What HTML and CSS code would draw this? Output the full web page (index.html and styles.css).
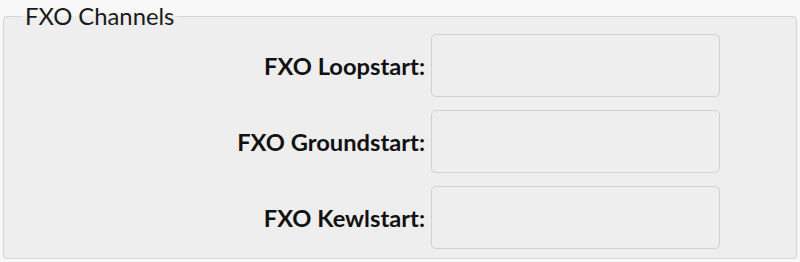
FILE: index.html
```html
<!DOCTYPE html>
<html lang="en">
<head>
    <meta charset="UTF-8">
    <title>FXO Channels</title>
    <link rel="stylesheet" href="styles.css">
</head>
<body>
    <fieldset class="channels">
        <legend>FXO Channels</legend>
        <div class="rows">
            <label for="loopstart">FXO Loopstart:</label>
            <input type="text" id="loopstart">

            <label for="groundstart">FXO Groundstart:</label>
            <input type="text" id="groundstart">

            <label for="kewlstart">FXO Kewlstart:</label>
            <input type="text" id="kewlstart">
        </div>
    </fieldset>
</body>
</html>
```

FILE: styles.css
```css
body {
    margin: 0;
    padding: 2px 3px 0;
    background-color: #f8f8f8;
    font-family: Lato, "Open Sans", sans-serif;
    color: #111;
}

.channels {
    margin: 0;
    padding: 4px 0 9px;
    border: 1px solid #d6d6d6;
    border-radius: 4px;
    background-color: #eeeeee;
    box-shadow: 0 1px 2px rgba(0, 0, 0, 0.08);
}

legend {
    margin-left: 18px;
    padding: 0 3px;
    font-size: 23.8px;
    line-height: 28px;
    color: #1a1a1a;
}

.rows {
    display: grid;
    grid-template-columns: 421px 289px;
    column-gap: 6px;
    row-gap: 13px;
    align-items: center;
}

label {
    text-align: right;
    font-weight: bold;
    font-size: 23.7px;
}

input {
    height: 63px;
    box-sizing: border-box;
    margin: 0;
    border: 1px solid #d1d1d1;
    border-radius: 5px;
    background-color: #eeeeee;
}
```
